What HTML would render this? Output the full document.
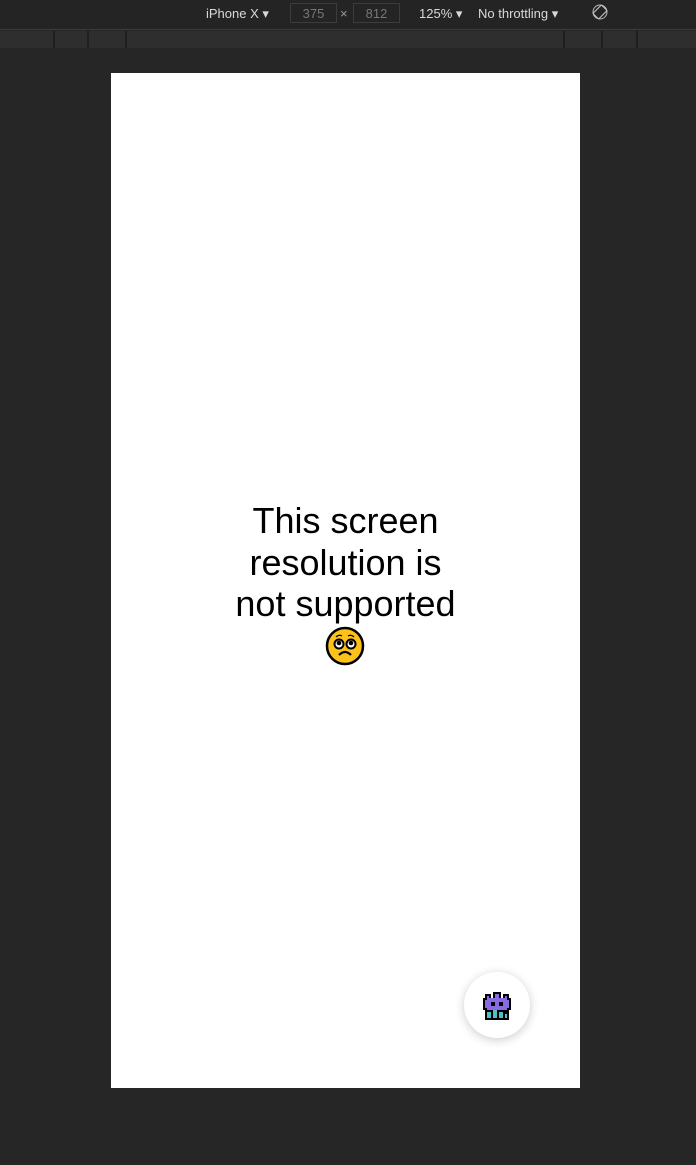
<!DOCTYPE html>
<html><head><meta charset="utf-8"><style>
html,body{margin:0;padding:0;width:696px;height:1165px;background:#262626;overflow:hidden;font-family:"Liberation Sans",sans-serif;position:relative}
.tb{position:absolute;left:0;top:0;width:696px;height:28px;background:#242424;color:#d8d8d8;font-size:13px}
.tb span{position:absolute;top:6px}
.box{position:absolute;top:3px;height:20px;border:1px solid #3c3c3c;color:#777;font-size:13px;line-height:20px;text-align:center;box-sizing:border-box}
.rule{position:absolute;left:0;top:29px;width:696px;height:1px;background:#3a3a3a}
.ruler{position:absolute;left:0;top:31px;width:696px;height:17px;background:#2e2e2e}
.sep{position:absolute;top:31px;width:2px;height:17px;background:#1e1e1e}
.page{position:absolute;left:111px;top:73px;width:469px;height:1015px;background:#fff}
.msg{position:absolute;left:0;width:469px;top:427px;text-align:center;font-size:36px;line-height:41.5px;color:#000}
.fab{position:absolute;left:353px;top:899px;width:66px;height:66px;border-radius:50%;background:#fff;box-shadow:0 2px 10px rgba(0,0,0,.2)}
</style></head><body>
<div class="tb">
<span style="left:206px">iPhone X ▾</span>
<div class="box" style="left:290px;width:47px">375</div>
<span style="left:340px;color:#999">×</span>
<div class="box" style="left:353px;width:47px">812</div>
<span style="left:419px">125% ▾</span>
<span style="left:478px">No throttling ▾</span>
<span style="left:592px;top:4px"><svg width="16" height="16" viewBox="0 0 16 16"><rect x="4" y="2" width="8" height="12" rx="1" transform="rotate(45 8 8)" fill="none" stroke="#bbb" stroke-width="1.2"/><circle cx="8" cy="8" r="7" fill="none" stroke="#bbb" stroke-width="1"/></svg></span>
</div>
<div class="rule"></div>
<div class="ruler"></div>
<div class="sep" style="left:53px"></div><div class="sep" style="left:87px"></div><div class="sep" style="left:125px"></div>
<div class="sep" style="left:563px"></div><div class="sep" style="left:601px"></div><div class="sep" style="left:636px"></div>
<div class="page">
<div class="msg">This screen<br>resolution is<br>not supported</div>
<svg style="position:absolute;left:214px;top:553px" width="40" height="40" viewBox="0 0 40 40">
<circle cx="20" cy="20" r="18" fill="#fcc21b" stroke="#000" stroke-width="2.5"/>
<circle cx="14" cy="18" r="4.5" fill="#fff" stroke="#000" stroke-width="2"/><circle cx="26" cy="18" r="4.5" fill="#fff" stroke="#000" stroke-width="2"/>
<circle cx="14" cy="17" r="2.3" fill="#000"/><circle cx="26" cy="17" r="2.3" fill="#000"/>
<path d="M11 11 Q14 8 17 10 M23 10 Q26 8 29 11" stroke="#000" stroke-width="1.2" fill="none"/>
<path d="M14 29 Q20 23 26 29" stroke="#000" stroke-width="2.2" fill="none"/>
</svg>
<div class="fab">
<svg style="position:absolute;left:19px;top:20px" width="28" height="28" viewBox="0 0 14 14" shape-rendering="crispEdges">
<g fill="#000">
<rect x="1" y="1" width="3" height="3"/><rect x="5" y="0" width="4" height="3"/><rect x="10" y="1" width="3" height="3"/>
<rect x="0" y="3" width="14" height="6"/><rect x="1" y="9" width="12" height="5"/>
</g>
<g fill="#8a6ae0">
<rect x="2" y="2" width="1" height="2"/><rect x="6" y="1" width="2" height="2"/><rect x="11" y="2" width="1" height="2"/>
<rect x="1" y="4" width="12" height="4"/><rect x="2" y="3" width="10" height="1"/><rect x="2" y="8" width="10" height="1"/>
</g>
<rect x="4" y="5" width="2" height="2" fill="#000"/><rect x="8" y="5" width="2" height="2" fill="#000"/>
<g fill="#4ec0c8">
<rect x="2" y="10" width="2" height="3"/><rect x="5" y="9" width="2" height="4"/><rect x="8" y="10" width="2" height="3"/><rect x="11" y="11" width="1" height="2"/>
</g>
</svg>
</div>
</div>
</body></html>
